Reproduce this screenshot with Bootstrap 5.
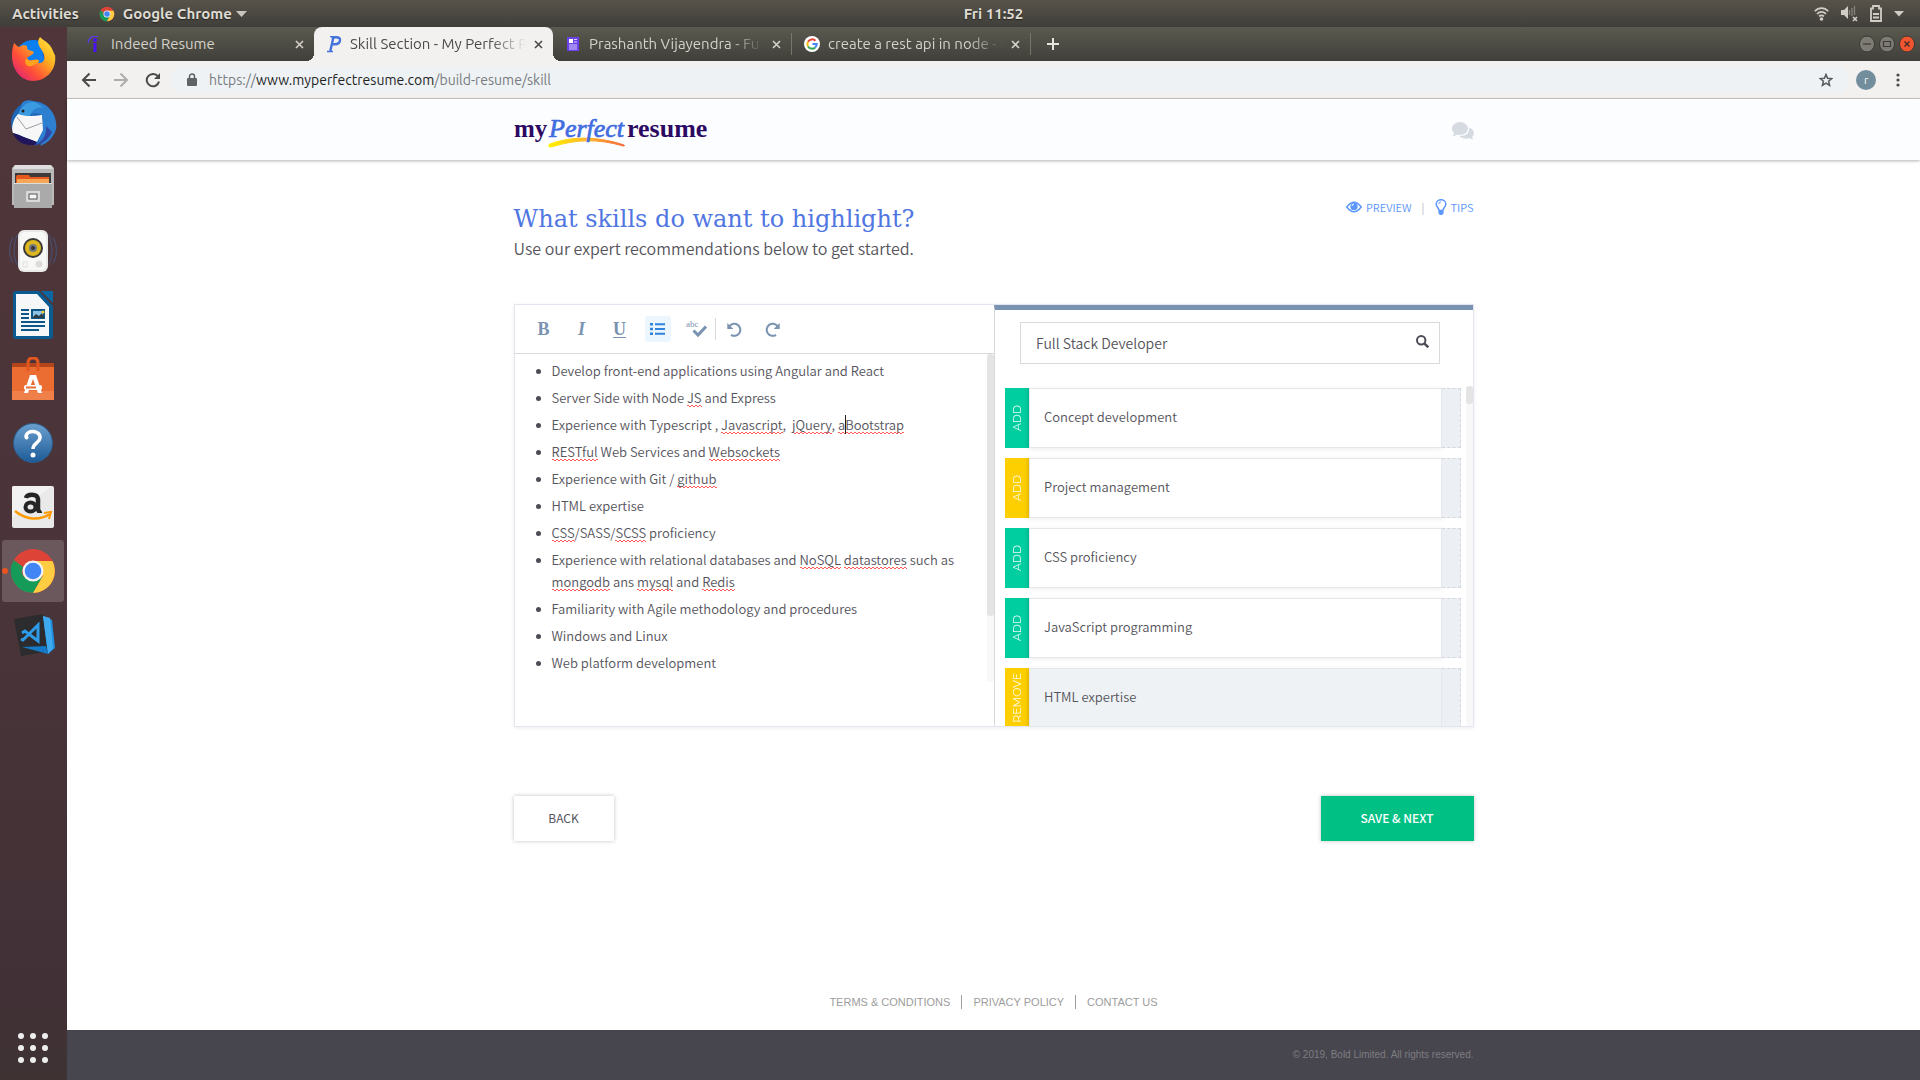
<!DOCTYPE html>
<html lang="en">
<head>
<meta charset="utf-8">
<meta name="viewport" content="width=device-width, initial-scale=1">
<title>Skill Section - My Perfect Resume</title>
<link href="https://cdn.jsdelivr.net/npm/bootstrap@5.3.0/dist/css/bootstrap.min.css" rel="stylesheet">
<style>
  :root { --sys: Ubuntu, "Noto Sans", sans-serif; --page: "Source Sans Pro", "Noto Sans CJK SC", sans-serif; }
  body { font-family: var(--page); font-size: 13px; font-weight: 350; line-height: 22px; color: #55545c; background: #fff; }
  a { text-decoration: none; }
  svg { display: block; flex: none; }
  button { font-family: inherit; }

  /* desktop top bar */
  .sysbar { height: 27px; background: linear-gradient(#57534b, #403e39); font: 600 15px/20px var(--sys); color: #dfdbd2; text-shadow: 0 1px 1px #222; }
  .sysbar .side { flex: 1 1 0; }
  .sysbar .side:first-child { flex-basis: 83px; }
  .sysbar button { color: inherit; text-shadow: inherit; font-weight: 600; }
  .indicators { gap: 12px; }
  .bare { border: 0; background: none; padding: 0; }

  /* dock */
  .dock { width: 67px; background: linear-gradient(#50363a, #493439 55%, #413136 92%, #3e3233); }
  .dock button { width: 62px; height: 62px; margin: 1px 3px 1px 2px; border-radius: 3px; }
  .dock button.running { background: #6b585d; position: relative; }
  .dock button.running::before { content: ""; position: absolute; left: 0; top: 28px; width: 6px; height: 6px; border-radius: 50%; background: #e95420; }

  /* browser chrome */
  .tabstrip { height: 34px; padding: 0 5px 0 8px; background: linear-gradient(#5b5a50, #403f3a); font: 15px/20px var(--sys); color: #d4d1c9; }
  .tab { width: 239px; padding: 0 10px 0 12px; position: relative; }
  .tab a { color: inherit; flex: 1 1 0; overflow: hidden; white-space: nowrap; margin-right: 8px; }
  .tab button { color: inherit; }
  .tab a.fades { -webkit-mask-image: linear-gradient(90deg, #000 80%, transparent); mask-image: linear-gradient(90deg, #000 80%, transparent); }
  .tab.current { background: #f2f1f0; color: #4a4a4a; border-radius: 8px 8px 0 0; }
  .tab.current::before, .tab.current::after { content: ""; position: absolute; bottom: 0; width: 8px; height: 8px; }
  .tab.current::before { left: -8px; background: radial-gradient(circle at 0 0, transparent 8px, #f2f1f0 8px); }
  .tab.current::after { right: -8px; background: radial-gradient(circle at 100% 0, transparent 8px, #f2f1f0 8px); }
  .tab.ruled { border-right: 1px solid #77756c; height: 22px; }
  .addressbar { height: 38px; padding: 0 16px 0 14px; background: #f2f1f0; border-bottom: 1px solid #c8c8c8; }
  .omnibox { height: 28px; border-radius: 14px; background: #eef2f4; padding: 0 15px 0 16px; margin-left: 10px; font: 14px/20px var(--sys); color: #777b80; }
  .omnibox b { font-weight: 400; color: #222; }
  .avatar { width: 20px; height: 20px; border-radius: 50%; background: #728e9c; color: #fff; font: 11px/20px var(--sys); margin: 0 20px 0 8px; }

  /* site */
  .wrap { max-width: 960px; margin: 0 auto; }
  .sitehead { background: #fcfdff; height: 61px; padding-top: 2px; box-shadow: 0 1px 3px rgba(0,0,0,.3); }
  .title { font: 300 24px/38px "Roboto Slab", "DejaVu Serif", serif; color: #5076e2; }
  .subtitle { font-size: 16px; line-height: 20px; }
  .helpers { font-size: 11px; line-height: 14px; padding-top: 15px; color: #b9a9bd; }
  .helpers a { color: #5c97fb; }
  .helpers .bar { margin: 0 10px; }

  .panel { margin-top: 46px; border: 1px solid #e3e6ee; box-shadow: 0 1px 4px rgba(0,0,0,.08); height: 423px; }
  .pane-left { flex: 1 1 2px; }
  .pane-right { flex: 1 1 0; border-left: 1px solid #d8d9dc; border-top: 5px solid #7a93b0; }
  .tools { height: 49px; padding: 0 16px; border-bottom: 1px solid #d8d9dc; }
  .tools button { width: 26px; height: 26px; border-radius: 3px; margin-right: 12px; color: #7a93b0; }
  .tools button.on { background: #ecf6ff; color: #2f83dc; }
  .tools .rule { width: 1px; height: 22px; background: #d5d7da; margin: 0 6px 0 -6px; }
  .tools .letter { font: bold 18px/22px "Liberation Serif", serif; text-decoration-thickness: 2px; text-underline-offset: 2px; }
  .editor { padding: 6px 16px 0 37px; outline: 0; }
  .editor ul { list-style: none; padding: 0; margin: 0; }
  .editor li { margin-bottom: 5px; position: relative; }
  .editor li::before { content: ""; position: absolute; left: -16px; top: 9px; width: 5px; height: 5px; border-radius: 50%; background: #4d4c55; }
  .typo { background:
      linear-gradient(90deg, #ff5a5a 50%, transparent 50%) 0 calc(100% - 1px) / 4px 1px repeat-x,
      linear-gradient(90deg, transparent 50%, #ff5a5a 50%) 0 100% / 4px 1px repeat-x; }
  .caret { border-left: 1px solid #222; margin-right: -1px; }
  .track { flex: none; width: 7px; background: #f8f8f8; border-radius: 3px; }
  .thumb { background: #e4e4e4; border-radius: 3px; }
  .track.tall { margin-bottom: 44px; }
  .track.tall .thumb { height: 80%; }
  .track.short { margin-top: 22px; }
  .track.short .thumb { height: 18px; }

  .search { margin: 12px 33px 0 25px; height: 42px; border: 1px solid #d8dadd; padding: 0 10px 0 15px; }
  .search input { border: 0; outline: 0; background: none; flex: 1 1 0; padding: 0; color: #55545c; font-size: 14px; font-weight: 350; }
  .phrases { margin-top: 22px; padding: 2px 5px 0 10px; overflow: hidden; }
  .phrase { height: 60px; margin-bottom: 10px; }
  .phrase button { width: 24px; color: #fff; font: 400 11px/24px Montserrat, Inter, sans-serif; background: #00cea0; box-shadow: inset -4px 0 4px -3px rgba(0,0,0,.1); }
  .phrase.expert button { background: #fecf00; }
  .phrase button span { writing-mode: vertical-rl; transform: rotate(180deg); opacity: .9; }
  .phrase .words { border: 1px solid #e5e7ec; box-shadow: 0 1px 5px rgba(0,0,0,.08); padding: 0 0 2px 14px; background: #fff; }
  .phrase .tail { width: 19px; background: #ecf0f5; border: 1px dashed #d3d7dd; border-left: 0; }
  .phrase.chosen .words { background: #eef2f5; }

  .actions { margin-top: 69px; }
  .cta { height: 45px; min-width: 100px; padding: 0 24px 1px; border: 0; font-size: 12px; background: #fff; color: #55545c; box-shadow: 0 0 4px rgba(0,0,0,.25); }
  .cta.go { min-width: 153px; background: #00c083; color: #fff; font-weight: 500; }
  .legal { font: 11px/14px "Liberation Sans", sans-serif; padding-bottom: 21px; }
  .legal a { color: #9d9d9d; padding: 0 11px; }
  .legal a + a { border-left: 1px solid #9d9d9d; }
  .bottom { height: 50px; background: #47454e; color: #7e7d80; font: 10px/14px "Liberation Sans", sans-serif; }
</style>
</head>
<body class="d-flex flex-column min-vh-100">

<svg width="0" height="0" class="position-absolute" aria-hidden="true">
  <defs>
    <g id="chromeball">
      <circle cx="24" cy="24" r="22" fill="#dd4437"/>
      <path d="M4.900 13A22 22 0 0 0 24 46l9.500-16.500L24 34l-9.500-4.500z" fill="#149b57"/>
      <path d="M43.400 14A22 22 0 0 1 24 46l9.500-16.500L34 24 24 14z" fill="#ffcd42"/>
      <path d="M4.900 13L14.500 29.500A11 11 0 0 1 14 20z" fill="#149b57"/>
      <circle cx="24" cy="24" r="10.500" fill="#f4f4f4"/>
      <circle cx="24" cy="24" r="8.300" fill="#4285f4"/>
    </g>
    <path id="cross" d="M1 1l7 7M8 1l-7 7" fill="none" stroke="currentColor" stroke-width="1.600"/>
  </defs>
</svg>

<div class="sysbar d-flex align-items-center">
  <div class="side d-flex align-items-center">
    <button class="bare ms-2 ps-1">Activities</button>
    <button class="bare d-flex align-items-center ms-3 ps-1">
      <svg class="me-2" width="16" height="16" viewBox="0 0 48 48"><use href="#chromeball"/></svg>Google Chrome
      <svg class="ms-1" width="11" height="6" viewBox="0 0 11 6"><path d="M0 0h11L5.500 6z" fill="#c9c6bf"/></svg>
    </button>
  </div>
  <button class="bare">Fri 11:52</button>
  <div class="side indicators d-flex align-items-center justify-content-end pe-3">
    <svg width="15" height="15" viewBox="0 0 15 15" fill="none" stroke="#d0cdc6" stroke-width="1.700"><path d="M.8 5.200C4.500 1 10.500 1 14.200 5.200M3 8c2.700-2.800 6.300-2.800 9 0M5 10.400c1.600-1.400 3.400-1.400 5 0"/><circle cx="7.500" cy="13" r="1.800" fill="#d0cdc6" stroke="none"/></svg>
    <svg width="17" height="17" viewBox="0 0 17 17"><path d="M0 5h3l4-4v13l-4-4H0z" fill="#d0cdc6"/><path d="M8.500 5v5M11 3v8M13.500 1v9" stroke="#86837c" stroke-width="1.300"/><path d="M12 12l4 4M16 12l-4 4" stroke="#d0cdc6" stroke-width="1.600"/></svg>
    <svg width="12" height="17" viewBox="0 0 12 17"><path d="M1 3.500h2V1h6v2.500h2V16H1z" fill="none" stroke="#d0cdc6" stroke-width="1.800"/><path d="M3 9h6M3 12.500h6" stroke="#d0cdc6" stroke-width="2"/></svg>
    <svg width="10" height="6" viewBox="0 0 10 6"><path d="M0 0h10L5 5.500z" fill="#d0cdc6"/></svg>
  </div>
</div>

<div class="d-flex flex-grow-1">
  <nav class="dock d-flex flex-column flex-shrink-0" aria-label="Dock">
    <button class="bare d-flex align-items-center justify-content-center" aria-label="Firefox">
      <svg width="46" height="46" viewBox="0 0 46 46"><defs><linearGradient id="ff" x1="1" y1="0" x2="0" y2="1"><stop offset="0" stop-color="#fff04a"/><stop offset=".35" stop-color="#ffb01e"/><stop offset=".65" stop-color="#ff4f38"/><stop offset="1" stop-color="#d5168c"/></linearGradient></defs><circle cx="23" cy="22" r="18" fill="#0a7ff2"/><path d="M15 28c4 8 15 8 20-1l-3-14 6 14-7 9H20z" fill="#1d3fae"/><path d="M4 7c2 2 3 3 5 4 3-2 6-2 8-1 0 3 0 4 5 5l2 1c-1 3-5 4-7 6 2 5 6 1 11 2 2 1 1 2-1 3 9 1 9-7 4-14C26 6 29 3 30 1c2 3 10 5 13 14 1 2 1 3 2 4 2 14-8 26-22 26C9 45-3 29 4 7z" fill="url(#ff)"/><path d="M17 22c2 5 7 1 11 2 2 1 1 2-1 3-3 2-6 4-9 3-3-2-4-5-1-8z" fill="#ffa21d"/></svg>
    </button>
    <button class="bare d-flex align-items-center justify-content-center" aria-label="Thunderbird">
      <svg width="48" height="48" viewBox="0 0 48 48"><circle cx="24" cy="24" r="22" fill="#1f66b9"/><path d="M13 4c5-5 12-2 13-1 16 1 23 17 21 27-2 8-8 14-16 17l3-5-5 2 4-12 1-14C28 8 12 22 10 16z" fill="#2d7fd0"/><path d="M9 18c0-8 8-16 17-15l9 6c-8-2-12 2-14 8L11 22z" fill="#3a9be0"/><path d="M24 47c10-4 14-11 13-20l6 6c-3 7-9 12-19 14z" fill="#3247a5"/><path d="M6 19l3-4c8 3 16 2 24 1l1 15-6 12C19 40 11 36 4 34 2 29 4 23 6 19z" fill="#f7f7f8"/><path d="M8 18l9 12 16-6" fill="none" stroke="#9ba0a6"/><path d="M4 34c7 2 15 6 24 9l-2 3C14 47 7 42 4 34z" fill="#21155c"/><circle cx="14" cy="12" r="1.500" fill="#222"/></svg>
    </button>
    <button class="bare d-flex align-items-center justify-content-center" aria-label="Files">
      <svg width="42" height="44" viewBox="0 0 42 44"><path d="M3 0h36l3 3v37H0V3z" fill="#b9b9b9"/><path d="M3 0h36l2 4H1z" fill="#dedede"/><path d="M3 8h36v10H3z" fill="#3e3a39"/><path d="M4 12l1-2h12l1 2h19v7H4z" fill="#e8591d"/><path d="M5 14h32v5H5z" fill="#f5a656"/><path d="M2 18h38v25H2z" fill="#aaa"/><path d="M2 18h38v1H2z" fill="#ddd"/><rect x="14" y="26" width="14" height="11" rx="1" fill="#d9d9d9"/><rect x="17" y="29" width="8" height="5" fill="#f6f6f6" stroke="#555"/></svg>
    </button>
    <button class="bare d-flex align-items-center justify-content-center" aria-label="Rhythmbox">
      <svg width="48" height="44" viewBox="0 0 48 44"><path d="M4 8q-7 14 0 26M8 6q-6 16 0 30M44 8q7 14 0 26M40 6q6 16 0 30" fill="none" stroke="#4a4c68" stroke-width="1.300"/><rect x="9" y="1" width="30" height="42" rx="6" fill="#e9e9e9"/><rect x="11" y="3" width="26" height="38" rx="5" fill="#f8f8f6"/><circle cx="24" cy="19" r="10" fill="#3c3a38"/><circle cx="24" cy="19" r="8" fill="#dcb81e"/><circle cx="24" cy="19" r="4" fill="#77797a"/><circle cx="24" cy="19" r="2" fill="#333"/><circle cx="30" cy="35" r="3.500" fill="#dcdcdc"/><rect x="14" y="33" width="4" height="5" fill="none" stroke="#ddd"/></svg>
    </button>
    <button class="bare d-flex align-items-center justify-content-center" aria-label="LibreOffice Writer">
      <svg width="40" height="48" viewBox="0 0 40 48"><path d="M3 0h23l14 15v30a3 3 0 0 1-3 3H3a3 3 0 0 1-3-3V3a3 3 0 0 1 3-3z" fill="#0b5b90"/><path d="M28 0h12v12z" fill="#0d67a0"/><path d="M3 3h21l12 13v29H3z" fill="#f6f7f8"/><path d="M8 19h8M8 23h8M8 27h8M8 31h24M8 35h24M8 39h18" stroke="#0e5789" stroke-width="2"/><path d="M18 18h14v10H18z" fill="#0e5789"/><path d="M20 20h10v6H20z" fill="#8ec3e6"/><path d="M19 27l4-4 3 2 3-3 2 5z" fill="#2e3c43"/><circle cx="30" cy="21" r="1.500" fill="#f5c83a"/></svg>
    </button>
    <button class="bare d-flex align-items-center justify-content-center" aria-label="Ubuntu Software">
      <svg width="42" height="44" viewBox="0 0 42 44"><path d="M0 6h42v6H0z" fill="#b2451a"/><path d="M0 10h42v33H0z" fill="#ec6d32"/><path d="M0 34h42v9H0z" fill="#f08049"/><path d="M16 14V6q0-5 5-5t5 5v8" fill="none" stroke="#e2571e" stroke-width="3"/><path d="M18 18h6l6 18h-4l-5-14-5 14h-4z" fill="#fff"/><rect x="12" y="28" width="18" height="5" rx="2" fill="#fff"/><path d="M14 30.500h10" stroke="#ec6d32" stroke-width="2"/></svg>
    </button>
    <button class="bare d-flex align-items-center justify-content-center" aria-label="Help">
      <svg width="40" height="40" viewBox="0 0 40 40"><defs><linearGradient id="hp" x2="0" y2="1"><stop stop-color="#6ba0cf"/><stop offset="1" stop-color="#1e5b98"/></linearGradient></defs><circle cx="20" cy="20" r="19.500" fill="url(#hp)" stroke="#2b5d8c"/><path d="M13 14c0-8 15-7 14 1-.5 5-7 5-7 11" fill="none" stroke="#fff" stroke-width="3.500"/><circle cx="13.500" cy="14.500" r="2" fill="#fff"/><circle cx="20" cy="32" r="2.500" fill="#fff"/></svg>
    </button>
    <button class="bare d-flex align-items-center justify-content-center" aria-label="Amazon">
      <svg width="42" height="42" viewBox="0 0 42 42"><rect width="42" height="42" rx="2" fill="#e9e9ea"/><path d="M0 2q0-2 2-2h38L0 32z" fill="#f2f2f3"/><path d="M14 12c1-4 11-5 12 1v10c0 2 2 3 2 4" fill="none" stroke="#262626" stroke-width="4.500"/><ellipse cx="18.500" cy="21" rx="5" ry="4.500" fill="none" stroke="#262626" stroke-width="4"/><path d="M3 25c11 9 24 10 35 3" fill="none" stroke="#f90" stroke-width="2.500"/><path d="M32 27l7-1-2 7" fill="none" stroke="#f90" stroke-width="2"/></svg>
    </button>
    <button class="bare running d-flex align-items-center justify-content-center" aria-label="Google Chrome">
      <svg width="48" height="48" viewBox="0 0 48 48"><use href="#chromeball"/></svg>
    </button>
    <button class="bare d-flex align-items-center justify-content-center" aria-label="Visual Studio Code">
      <svg class="ms-1" width="42" height="44" viewBox="0 0 42 44"><path d="M0 6l29-5 8 37-30 5z" fill="#2c2c2e"/><path d="M29 3l9 4 3 28-7 6z" fill="#1f8fdf"/><path d="M29 3l7 2 3 30-5 6z" fill="#3fa9f0"/><path d="M8 34l24-1 2 8z" fill="#1479c6"/><path d="M8 20l3-2 13 10V12L9 27l-2-1" fill="none" stroke="#2d9be8" stroke-width="3"/></svg>
    </button>
    <button class="bare d-flex align-items-center justify-content-center mt-auto" aria-label="Show Applications">
      <svg width="30" height="30" viewBox="0 0 30 30" fill="#eee"><circle cx="3" cy="3" r="3"/><circle cx="15" cy="3" r="3"/><circle cx="27" cy="3" r="3"/><circle cx="3" cy="15" r="3"/><circle cx="15" cy="15" r="3"/><circle cx="27" cy="15" r="3"/><circle cx="3" cy="27" r="3"/><circle cx="15" cy="27" r="3"/><circle cx="27" cy="27" r="3"/></svg>
    </button>
  </nav>

  <div class="flex-grow-1 d-flex flex-column">
    <div class="tabstrip d-flex align-items-center">
      <div class="tab d-flex align-items-center">
        <svg class="me-2" width="16" height="16" viewBox="0 0 16 16"><path d="M1 7C2 1 7-1 11 1" fill="none" stroke="#5a3df0" stroke-width="1.300"/><circle cx="8" cy="4" r="2" fill="#4a12f5"/><path d="M6.500 7h3v9h-3z" fill="#4a12f5"/></svg>
        <a href="#">Indeed Resume</a>
        <button class="bare" aria-label="Close tab"><svg width="9" height="9"><use href="#cross"/></svg></button>
      </div>
      <div class="tab current d-flex align-items-center align-self-stretch">
        <svg class="me-2" width="16" height="18" viewBox="0 0 16 18"><path d="M5.500 2.200H10q4.500 0 4 3.300-.6 3.700-5 3.700H6.500M7.500 2L4.300 16" fill="none" stroke="#4472dc" stroke-width="2.400"/><path d="M4 1.700h4M1 16.500h6" stroke="#4472dc" stroke-width="1.300"/></svg>
        <a href="#" class="fades">Skill Section - My Perfect R</a>
        <button class="bare" aria-label="Close tab"><svg width="9" height="9"><use href="#cross"/></svg></button>
      </div>
      <div class="tab ruled d-flex align-items-center">
        <svg class="me-2" width="16" height="16" viewBox="0 0 16 16"><rect x="2" y="1" width="12" height="14" fill="#6a42e8"/><path d="M4 3h4v4H4z" fill="#fff"/><path d="M9 3.500h3M9 6h3M4 9h8M4 11h8M4 13h8" stroke="#d9cffc"/></svg>
        <a href="#" class="fades">Prashanth Vijayendra - Fu</a>
        <button class="bare" aria-label="Close tab"><svg width="9" height="9"><use href="#cross"/></svg></button>
      </div>
      <div class="tab ruled d-flex align-items-center">
        <svg class="me-2" width="16" height="16" viewBox="0 0 16 16" fill="none" stroke-width="2"><circle cx="8" cy="8" r="8" fill="#fff"/><path d="M11.500 4.800A4.700 4.700 0 0 0 4 5.800" stroke="#ea4335"/><path d="M4 5.800a4.700 4.700 0 0 0 0 4.600" stroke="#fbbc05"/><path d="M4 10.400a4.700 4.700 0 0 0 7.200 1" stroke="#34a853"/><path d="M11.200 11.400A4.700 4.700 0 0 0 12.700 8H8.500" stroke="#4285f4"/></svg>
        <a href="#" class="fades">create a rest api in node - G</a>
        <button class="bare" aria-label="Close tab"><svg width="9" height="9"><use href="#cross"/></svg></button>
      </div>
      <button class="bare ms-3" aria-label="New tab"><svg width="12" height="12" viewBox="0 0 12 12"><path d="M6 0v12M0 6h12" stroke="#e6e4df" stroke-width="2"/></svg></button>
      <div class="ms-auto d-flex gap-1">
        <button class="bare" aria-label="Minimize"><svg width="16" height="18" viewBox="0 0 16 18"><ellipse cx="8" cy="9" rx="7.500" ry="8" fill="#7d7b74" stroke="#3a3935"/><path d="M4 9h8" stroke="#3a3935" stroke-width="1.200"/></svg></button>
        <button class="bare" aria-label="Maximize"><svg width="16" height="18" viewBox="0 0 16 18"><ellipse cx="8" cy="9" rx="7.500" ry="8" fill="#7d7b74" stroke="#3a3935"/><path d="M4.500 6.500h7v5h-7z" fill="none" stroke="#3a3935" stroke-width="1.200"/></svg></button>
        <button class="bare" aria-label="Close"><svg width="16" height="18" viewBox="0 0 16 18"><ellipse cx="8" cy="9" rx="7.500" ry="8" fill="#f0552f" stroke="#3a3935"/><path d="M5.500 6.500l5 5M10.500 6.500l-5 5" stroke="#3a2a25" stroke-width="1.200"/></svg></button>
      </div>
    </div>

    <div class="addressbar d-flex align-items-center">
      <button class="bare me-3" aria-label="Back"><svg width="16" height="16" viewBox="0 0 16 16" fill="none" stroke="#4a4a4a" stroke-width="2"><path d="M15 8H2M8.500 1.500L2 8l6.500 6.500"/></svg></button>
      <button class="bare me-3" aria-label="Forward"><svg width="16" height="16" viewBox="0 0 16 16" fill="none" stroke="#adadad" stroke-width="2"><path d="M1 8h13M7.500 1.500L14 8l-6.500 6.500"/></svg></button>
      <button class="bare" aria-label="Reload"><svg width="16" height="16" viewBox="0 0 16 16"><path d="M13 4.500A6.200 6.200 0 1 0 14 9.500" fill="none" stroke="#4a4a4a" stroke-width="2"/><path d="M15 1v6H9z" fill="#4a4a4a"/></svg></button>
      <div class="omnibox d-flex align-items-center flex-grow-1">
        <svg width="10" height="13" viewBox="0 0 10 13"><rect y="5" width="10" height="8" rx="1" fill="#5f6368"/><path d="M2.500 6V3.500a2.500 2.500 0 0 1 5 0V6" fill="none" stroke="#5f6368" stroke-width="1.500"/></svg>
        <span class="ms-2 ps-1">https://<b>www.myperfectresume.com</b>/build-resume/skill</span>
        <button class="bare ms-auto" aria-label="Bookmark"><svg width="14" height="14" viewBox="0 0 14 14"><path d="M7 1.500l1.600 3.800 4.200.3-3.200 2.700 1 4.100L7 10.200l-3.600 2.200 1-4.100L1.200 5.600l4.200-.3z" fill="none" stroke="#55585c" stroke-width="1.500"/></svg></button>
      </div>
      <button class="bare avatar" aria-label="Profile">r</button>
      <button class="bare me-1" aria-label="Menu"><svg width="4" height="14" fill="#4a4a4a"><circle cx="2" cy="2" r="1.600"/><circle cx="2" cy="7" r="1.600"/><circle cx="2" cy="12" r="1.600"/></svg></button>
    </div>

    <header class="sitehead">
      <div class="wrap h-100 d-flex align-items-center justify-content-between">
        <a href="#" aria-label="myPerfectresume">
          <svg width="196" height="36" viewBox="0 0 196 36" font-family="Liberation Serif, serif">
            <defs><linearGradient id="sw"><stop stop-color="#fff000"/><stop offset=".5" stop-color="#fdb62a"/><stop offset="1" stop-color="#f4673c"/></linearGradient></defs>
            <path d="M36 31c22-8 47-8 74 1 .8.400.5 1.300-.5 1C83 25.500 62 26.500 39 33.500c-4 1.500-6-1-3-2.500z" fill="url(#sw)" stroke="url(#sw)"/>
            <text x="0" y="24" font-size="25" font-weight="700" fill="#2d0a62">my</text>
            <text x="35" y="24" font-size="26" font-style="italic" fill="#416ce0" stroke="#416ce0" stroke-width=".7">Perfect</text>
            <text x="113" y="24" font-size="26" font-weight="700" fill="#2d0a62">resume</text>
          </svg>
        </a>
        <button class="bare" aria-label="Chat"><svg width="22" height="18" viewBox="0 0 22 18" fill="#d6dbe2"><path d="M8 0c4.500 0 8 3 8 6.500S12.500 13 8 13c-1 0-2-.1-3-.5C4 13.400 2.500 14 .5 14c1-1 1.500-2 1.500-3C.8 10 0 8.300 0 6.500 0 3 3.500 0 8 0z"/><path d="M17 5.500c3 1 5 3 5 5.500 0 1.500-.7 2.800-1.800 3.800 0 1 .6 2 1.300 2.700-1.700 0-3-.5-4-1.200-4 1.200-8 0-10-2.300 6 .3 10.500-3 9.500-8.500z"/></svg></button>
      </div>
    </header>

    <main class="wrap w-100">
      <div class="d-flex justify-content-between align-items-start pt-4">
        <div class="pt-3">
          <h1 class="title m-0">What skills do want to highlight?</h1>
          <p class="subtitle m-0">Use our expert recommendations below to get started.</p>
        </div>
        <div class="helpers d-flex align-items-center">
          <a href="#" class="d-flex align-items-center"><svg class="me-1" width="16" height="12" viewBox="0 0 16 12"><path d="M.8 6Q8-3.500 15.200 6 8 15.500.8 6z" fill="none" stroke="#5c97fb" stroke-width="1.500"/><circle cx="8" cy="5.500" r="3.700" fill="#5c97fb"/><path d="M6 5a2 2 0 0 1 2-2" fill="none" stroke="#fff"/></svg>PREVIEW</a>
          <span class="bar">|</span>
          <a href="#" class="d-flex align-items-center"><svg class="me-1" width="12" height="16" viewBox="0 0 12 16"><path d="M4 11.500C4 9 1.200 8 1.200 5.200a4.800 4.500 0 0 1 9.600 0C10.800 8 8 9 8 11.500z" fill="none" stroke="#5c97fb" stroke-width="1.500"/><path d="M6 2.800Q3.800 3 3.800 5" fill="none" stroke="#5c97fb"/><path d="M3.500 12h5v2.500L7 16H5l-1.500-1.500z" fill="#5c97fb"/></svg>TIPS</a>
        </div>
      </div>

      <section class="panel d-flex">
        <div class="pane-left d-flex flex-column">
          <div class="tools d-flex align-items-center" role="toolbar" aria-label="Formatting">
            <button class="bare letter" aria-label="Bold">B</button>
            <button class="bare letter fst-italic" aria-label="Italic">I</button>
            <button class="bare letter text-decoration-underline" aria-label="Underline">U</button>
            <button class="bare on d-flex align-items-center justify-content-center" aria-label="Bullets"><svg width="15" height="12" fill="currentColor"><path d="M0 0h3v2.400H0zM0 4.800h3v2.400H0zM0 9.600h3V12H0zM5 .2h10v2H5zM5 5h10v2H5zM5 9.800h10v2H5z"/></svg></button>
            <button class="bare d-flex align-items-center justify-content-center" aria-label="Spell check"><svg width="22" height="18" viewBox="0 0 22 18"><text x="1" y="7" font-family="Liberation Serif, serif" font-size="9" fill="#7a93b0">abc</text><path d="M8.500 10.500l4.500 4.500 8-8.500" fill="none" stroke="#7a93b0" stroke-width="3"/></svg></button>
            <span class="rule"></span>
            <button class="bare d-flex align-items-center justify-content-center" aria-label="Undo"><svg width="15" height="15" viewBox="0 0 15 15"><path d="M2.500 4.200A6 6 0 1 1 4 12.800" fill="none" stroke="#7a93b0" stroke-width="2"/><path d="M.3 1v6h6z" fill="#7a93b0"/></svg></button>
            <button class="bare d-flex align-items-center justify-content-center" aria-label="Redo"><svg width="15" height="15" viewBox="0 0 15 15"><path d="M12.500 4.200A6 6 0 1 0 11 12.800" fill="none" stroke="#7a93b0" stroke-width="2"/><path d="M14.700 1v6h-6z" fill="#7a93b0"/></svg></button>
          </div>
          <div class="d-flex flex-grow-1">
            <div class="editor flex-grow-1" role="textbox" aria-multiline="true" aria-label="Skills">
              <ul>
                <li>Develop front-end applications using Angular and React</li>
                <li>Server Side with Node <span class="typo">JS</span> and Express</li>
                <li>Experience with Typescript , <span class="typo">Javascript</span>,&nbsp; <span class="typo">jQuery</span>, <span class="typo">a<span class="caret"></span>Bootstrap</span></li>
                <li><span class="typo">RESTful</span> Web Services and <span class="typo">Websockets</span></li>
                <li>Experience with Git / <span class="typo">github</span></li>
                <li>HTML expertise</li>
                <li><span class="typo">CSS</span>/SASS/<span class="typo">SCSS</span> proficiency</li>
                <li>Experience with relational databases and <span class="typo">NoSQL</span> <span class="typo">datastores</span> such as <span class="typo">mongodb</span> ans <span class="typo">mysql</span> and <span class="typo">Redis</span></li>
                <li>Familiarity with Agile methodology and procedures</li>
                <li>Windows and Linux</li>
                <li>Web platform development</li>
              </ul>
            </div>
            <div class="track tall"><div class="thumb"></div></div>
          </div>
        </div>

        <div class="pane-right d-flex flex-column">
          <form class="search d-flex align-items-center flex-shrink-0">
            <label class="visually-hidden" for="job">Job title</label>
            <input id="job" type="text" value="Full Stack Developer">
            <button type="button" class="bare mb-1" aria-label="Search"><svg width="13" height="13" viewBox="0 0 13 13" fill="none" stroke="#4d4c55"><circle cx="5.200" cy="5.200" r="4.200" stroke-width="2"/><path d="M8.300 8.300l4 4" stroke-width="2.500"/></svg></button>
          </form>
          <div class="d-flex flex-grow-1 overflow-hidden">
            <div class="phrases flex-grow-1">
              <div class="phrase d-flex"><button class="bare d-flex align-items-center justify-content-center"><span>ADD</span></button><div class="words flex-grow-1 d-flex align-items-center">Concept development</div><div class="tail"></div></div>
              <div class="phrase expert d-flex"><button class="bare d-flex align-items-center justify-content-center"><span>ADD</span></button><div class="words flex-grow-1 d-flex align-items-center">Project management</div><div class="tail"></div></div>
              <div class="phrase d-flex"><button class="bare d-flex align-items-center justify-content-center"><span>ADD</span></button><div class="words flex-grow-1 d-flex align-items-center">CSS proficiency</div><div class="tail"></div></div>
              <div class="phrase d-flex"><button class="bare d-flex align-items-center justify-content-center"><span>ADD</span></button><div class="words flex-grow-1 d-flex align-items-center">JavaScript programming</div><div class="tail"></div></div>
              <div class="phrase expert chosen d-flex"><button class="bare d-flex align-items-center justify-content-center"><span>REMOVE</span></button><div class="words flex-grow-1 d-flex align-items-center">HTML expertise</div><div class="tail"></div></div>
            </div>
            <div class="track short"><div class="thumb"></div></div>
          </div>
        </div>
      </section>

      <div class="actions d-flex justify-content-between">
        <button class="cta">BACK</button>
        <button class="cta go">SAVE &amp; NEXT</button>
      </div>
    </main>

    <footer class="mt-auto">
      <nav class="legal d-flex justify-content-center" aria-label="Legal">
        <a href="#">TERMS &amp; CONDITIONS</a><a href="#">PRIVACY POLICY</a><a href="#">CONTACT US</a>
      </nav>
      <div class="bottom">
        <div class="wrap h-100 d-flex align-items-center justify-content-end">© 2019, Bold Limited. All rights reserved.</div>
      </div>
    </footer>
  </div>
</div>

<script src="https://cdn.jsdelivr.net/npm/bootstrap@5.3.0/dist/js/bootstrap.bundle.min.js"></script>
</body>
</html>
